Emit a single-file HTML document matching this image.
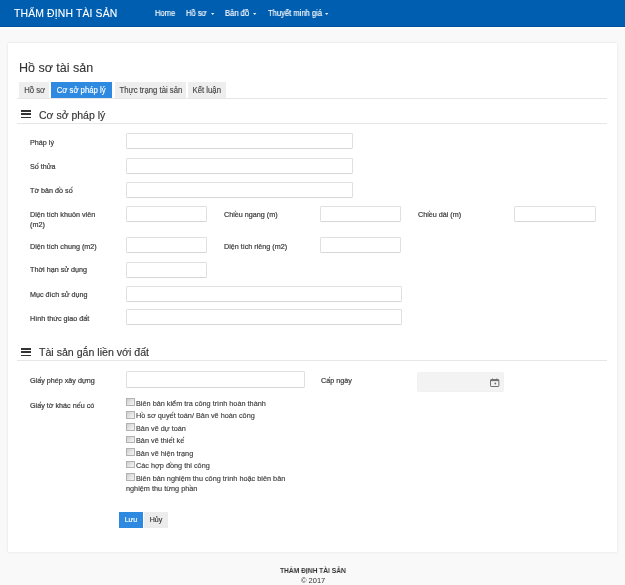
<!DOCTYPE html>
<html><head><meta charset="utf-8">
<style>
*{box-sizing:border-box;margin:0;padding:0}
html,body{width:625px;height:585px;overflow:hidden;background:#f9f9f9;font-family:"Liberation Sans",sans-serif;color:#333}
.a{position:absolute;white-space:nowrap;line-height:1;will-change:transform}
#nav{position:absolute;left:0;top:0;width:625px;height:27px;background:#005eb0;box-shadow:inset 0 -1px 0 rgba(0,0,0,.12),0 1.5px 0 #fff}
.brand{color:#fff;font-size:10.4px;letter-spacing:0.15px;-webkit-text-stroke:0.1px #fff}
.nl{color:#fff;font-size:8.3px;-webkit-text-stroke:0.15px #fff;transform:scaleX(0.915);transform-origin:0 0}
.cr{position:absolute;top:12.8px;width:4px;height:2.5px;fill:#e6eef8}
#card{position:absolute;left:8px;top:43.3px;width:609px;height:508.6px;background:#fff;box-shadow:0 0 2.5px rgba(0,0,0,.1)}
.title{font-size:12.5px;color:#333;-webkit-text-stroke:0.1px #333}
.tab{will-change:transform;position:absolute;top:82px;height:16px;background:#eee;color:#3d3d3d;font-size:7.8px;line-height:16.8px;-webkit-text-stroke:0.15px #555;text-align:center}
.tab span{display:inline-block;white-space:nowrap;transform:scaleX(0.9);transform-origin:50% 0;font-size:8.6px}
.tab.act{background:#2e8ae0;color:#fff;-webkit-text-stroke:0.15px #fff}
.hr{position:absolute;left:17px;width:590px;height:1px;background:#e6e6e6}
.sec{font-size:10.5px;color:#333;-webkit-text-stroke:0.15px #333}
.ham{position:absolute;width:10px;height:8px}
.ham i{position:absolute;left:0;width:9.8px;height:1.5px;background:#333}
.lbl{font-size:7.2px;color:#333;-webkit-text-stroke:0.2px #444}
.cbl{font-size:7.3px;-webkit-text-stroke:0.15px #555}
.inp{position:absolute;height:16px;border:1px solid #e0e0e0;border-bottom-color:#d6d6d6;border-radius:1.5px;background:#fff}
.cb{position:absolute;left:126px;width:8.6px;height:7.8px;margin-top:-0.7px;border:1px solid #b2b2b2;background:linear-gradient(135deg,#cdcdcd 0%,#e6e6e6 55%,#f5f5f5 100%)}
.btn{will-change:transform;position:absolute;top:512px;height:16px;font-size:7.1px;line-height:17.5px;text-align:center;-webkit-text-stroke:0.15px currentColor}
.foot{font-size:6.9px;color:#333}
</style></head><body>
<div id="nav"></div>
<div class="a brand" id="brand" style="left:14.2px;top:8.6px">THẨM ĐỊNH TÀI SẢN</div>
<div class="a nl" id="n1" style="left:154.5px;top:9.4px">Home</div>
<div class="a nl" id="n2" style="left:185.5px;top:9.4px">Hồ sơ</div>
<div class="a nl" id="n3" style="left:224.7px;top:9.4px">Bản đồ</div>
<div class="a nl" id="n4" style="left:267.5px;top:9.4px">Thuyết minh giá</div>
<svg class="cr" style="left:211px"><path d="M0 0H3.4L1.7 2Z"/></svg>
<svg class="cr" style="left:253.2px"><path d="M0 0H3.4L1.7 2Z"/></svg>
<svg class="cr" style="left:325px"><path d="M0 0H3.4L1.7 2Z"/></svg>

<div id="card"></div>
<div class="a title" id="title" style="left:18.9px;top:61.9px">Hồ sơ tài sản</div>

<div class="tab" style="left:19px;width:30.4px"><span>Hồ sơ</span></div>
<div class="tab act" style="left:51.3px;width:60.6px"><span>Cơ sở pháp lý</span></div>
<div class="tab" style="left:114.6px;width:71.4px"><span>Thực trạng tài sản</span></div>
<div class="tab" style="left:187.8px;width:38.3px"><span>Kết luận</span></div>
<div class="hr" style="top:98px"></div>

<div class="ham" style="left:21px;top:110px"><i style="top:0.1px"></i><i style="top:3.3px"></i><i style="top:6.5px"></i></div>
<div class="a sec" id="sec1" style="left:39px;top:110.1px">Cơ sở pháp lý</div>
<div class="hr" style="top:123px"></div>

<div class="a lbl" style="left:30px;top:139px">Pháp lý</div>
<div class="inp" style="left:126px;top:133.2px;width:227px"></div>
<div class="a lbl" style="left:30px;top:163px">Số thửa</div>
<div class="inp" style="left:126px;top:157.9px;width:227px"></div>
<div class="a lbl" style="left:30px;top:187px">Tờ bản đồ số</div>
<div class="inp" style="left:126px;top:181.8px;width:227px"></div>

<div class="a lbl" style="left:30px;top:210.4px;line-height:10px">Diện tích khuôn viên<br>(m2)</div>
<div class="inp" style="left:126px;top:205.9px;width:81px"></div>
<div class="a lbl" style="left:224px;top:211.4px">Chiều ngang (m)</div>
<div class="inp" style="left:320px;top:205.9px;width:81px"></div>
<div class="a lbl" style="left:418px;top:211.4px">Chiều dài (m)</div>
<div class="inp" style="left:514px;top:205.9px;width:81.5px"></div>

<div class="a lbl" style="left:30px;top:243px">Diện tích chung (m2)</div>
<div class="inp" style="left:126px;top:237.2px;width:81px"></div>
<div class="a lbl" style="left:224px;top:243px">Diện tích riêng (m2)</div>
<div class="inp" style="left:320px;top:237.2px;width:81px"></div>

<div class="a lbl" style="left:30px;top:266px">Thời hạn sử dụng</div>
<div class="inp" style="left:126px;top:261.8px;width:81px"></div>

<div class="a lbl" style="left:30px;top:290.9px">Mục đích sử dụng</div>
<div class="inp" style="left:126px;top:285.7px;width:275.5px"></div>
<div class="a lbl" style="left:30px;top:314.5px">Hình thức giao đất</div>
<div class="inp" style="left:126px;top:309.3px;width:275.5px"></div>

<div class="ham" style="left:21px;top:348px"><i style="top:0.1px"></i><i style="top:3.3px"></i><i style="top:6.5px"></i></div>
<div class="a sec" id="sec2" style="left:39px;top:347px;font-size:10.6px">Tài sản gắn liền với đất</div>
<div class="hr" style="top:360px"></div>

<div class="a lbl" style="left:30px;top:377px">Giấy phép xây dựng</div>
<div class="inp" style="left:126px;top:371px;width:179px;height:17px"></div>
<div class="a lbl" style="left:320.5px;top:376.8px">Cấp ngày</div>
<div class="inp" style="left:417px;top:372px;width:87px;height:19.5px;background:#f3f3f3;border-color:#f1f1f1"></div>
<svg style="position:absolute;left:490px;top:377.5px" width="9.5" height="9" viewBox="0 0 9.5 9"><rect x="0.55" y="1.6" width="8.3" height="6.9" rx="0.6" fill="none" stroke="#707070" stroke-width="1"/><rect x="0.55" y="1.6" width="8.3" height="1.5" fill="#707070"/><rect x="2" y="0.5" width="1" height="1.8" fill="#707070"/><rect x="6.3" y="0.5" width="1" height="1.8" fill="#707070"/><circle cx="5.3" cy="5.5" r="0.9" fill="#707070"/></svg>

<div class="a lbl" style="left:30px;top:402px">Giấy tờ khác nếu có</div>
<div class="cb" style="top:398.9px"></div><div class="a lbl cbl" style="left:136px;top:400px">Biên bản kiểm tra công trình hoàn thành</div>
<div class="cb" style="top:411.4px"></div><div class="a lbl cbl" style="left:136px;top:412.45px">Hồ sơ quyết toán/ Bản vẽ hoàn công</div>
<div class="cb" style="top:423.8px"></div><div class="a lbl cbl" style="left:136px;top:424.9px">Bản vẽ dự toán</div>
<div class="cb" style="top:436.3px"></div><div class="a lbl cbl" style="left:136px;top:437.35px">Bản vẽ thiết kế</div>
<div class="cb" style="top:448.8px"></div><div class="a lbl cbl" style="left:136px;top:449.8px">Bản vẽ hiện trạng</div>
<div class="cb" style="top:461.3px"></div><div class="a lbl cbl" style="left:136px;top:462.25px">Các hợp đồng thi công</div>
<div class="cb" style="top:473.7px"></div><div class="a lbl cbl" style="left:136px;top:474.7px">Biên bản nghiệm thu công trình hoặc biên bản</div>
<div class="a lbl cbl" style="left:126px;top:484.5px">nghiệm thu từng phần</div>

<div class="btn" style="left:119px;width:24px;background:#2e8ae0;color:#fff">Lưu</div>
<div class="btn" style="left:144px;width:24px;background:#ececec;color:#333">Hủy</div>

<div class="a foot" id="f1" style="left:280px;top:566.7px;font-weight:bold;font-size:7.4px;transform:scaleX(0.9);transform-origin:0 0">THẨM ĐỊNH TÀI SẢN</div>
<div class="a foot" id="f2" style="left:300.5px;top:576.8px;font-size:7.5px">© 2017</div>
</body></html>
